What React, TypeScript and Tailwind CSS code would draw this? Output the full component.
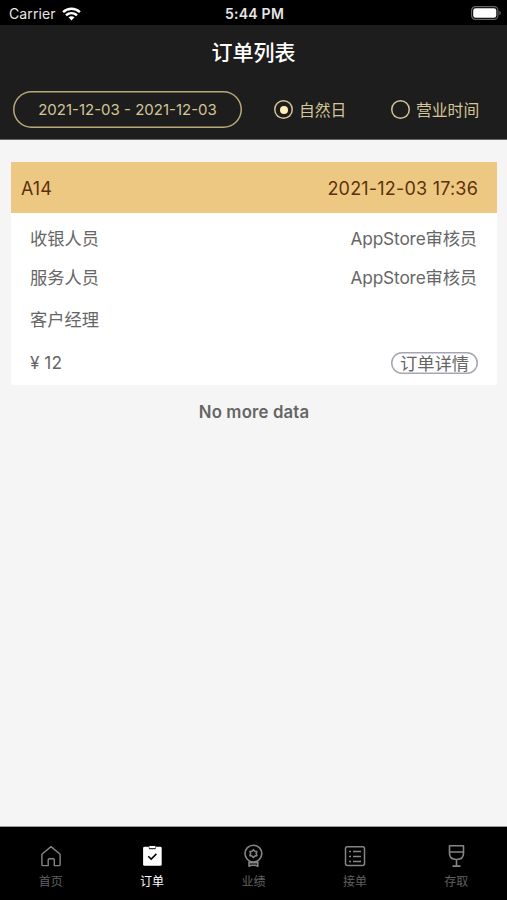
import type { ReactNode } from 'react';

function HomeIcon() {
  return (
    <svg width="24" height="24" viewBox="0 0 24 24" fill="none" stroke="#858585" strokeWidth="1.4" strokeLinejoin="round">
      <path d="M2.9 10.2 12 2.6l9.1 7.6v10.6a.8.8 0 0 1-.8.8h-5v-5.8a1 1 0 0 0-1-1h-4.1a1 1 0 0 0-1 1v5.8H3.7a.8.8 0 0 1-.8-.8z" />
    </svg>
  );
}

function OrderIcon() {
  return (
    <svg width="24" height="24" viewBox="0 0 24 24" fill="none">
      <rect x="3.1" y="2.8" width="18.6" height="19" rx="1.4" fill="#fff" />
      <rect x="8.9" y="1.8" width="7" height="3.4" rx="1" fill="#333" />
      <rect x="9.4" y="2" width="6" height="2" rx="0.5" fill="#fff" />
      <path d="m8.2 12.3 3 2.8 5.2-5.2" stroke="#000" strokeWidth="1.5" />
    </svg>
  );
}

function MedalIcon() {
  return (
    <svg width="24" height="24" viewBox="0 0 24 24" fill="none" stroke="#858585" strokeWidth="1.6" strokeLinejoin="round">
      <circle cx="12.4" cy="9.6" r="8.4" />
      <path d="m12.4 5.7 1.4 1.5 2 .4-.6 2 .6 2-2 .4-1.4 1.5-1.4-1.5-2-.4.6-2-.6-2 2-.4z" />
      <path d="M8 17.2v5l2.2-1h4.4l2.2 1v-5M8.2 18.6h8.4" />
    </svg>
  );
}

function ListIcon() {
  return (
    <svg width="24" height="24" viewBox="0 0 24 24" fill="none" stroke="#858585" strokeWidth="1.5">
      <rect x="2.5" y="2.8" width="19" height="18.8" rx="2" />
      <path d="M6 7.5h2M10 7.5h8M6 12.5h2M10 12.5h8M6 17.5h2M10 17.5h8" />
    </svg>
  );
}

function GlassIcon() {
  return (
    <svg width="24" height="24" viewBox="0 0 24 24" fill="none" stroke="#858585" strokeWidth="1.6" strokeLinejoin="round">
      <path d="M5.5 1.7h14v7.6c0 3.700-2.600 6.200-7 6.200s-7-2.500-7-6.200zM5.500 8h14M12.500 15.500v6.400M8.500 22.100h8" />
    </svg>
  );
}

const tabs: { label: string; icon: ReactNode; active?: boolean }[] = [
  { label: '首页', icon: <HomeIcon /> },
  { label: '订单', icon: <OrderIcon />, active: true },
  { label: '业绩', icon: <MedalIcon /> },
  { label: '接单', icon: <ListIcon /> },
  { label: '存取', icon: <GlassIcon /> },
];

function StatusBar() {
  return (
    <div className="grid h-[25px] shrink-0 grid-cols-[1fr_auto_1fr] items-center bg-black pl-[8px] pr-[6px] pt-[2px] text-[#e6e6e6]">
      <div className="flex items-center gap-[6px] pl-px">
        <span className="text-[14px] leading-none tracking-[0.1px]">Carrier</span>
        <svg width="19" height="14" viewBox="0 0 19 14" fill="none" stroke="#fff" strokeWidth="2.5">
          <path d="M1.1 5.2C6 .7 13 .7 17.9 5.2M4 8.300c3.300-2.900 7.700-2.900 11 0" />
          <path d="M6.5 10.3c1.800-1.500 4.200-1.500 6 0l-3 3.100z" fill="#fff" stroke="none" />
        </svg>
      </div>
      <span className="whitespace-nowrap text-center text-[14px] font-semibold leading-none tracking-[0.25px]">5:44 PM</span>
      <svg className="-mt-px justify-self-end" width="30" height="14" viewBox="0 0 30 14">
        <rect x=".6" y=".6" width="26.3" height="12.8" rx="3.8" fill="none" stroke="#666" strokeWidth="1.2" />
        <rect x="2.2" y="2.2" width="23.1" height="9.6" rx="2.4" fill="#fff" />
        <path d="M28.3 4.8c2 .8 2 3.600 0 4.400z" fill="#666" />
      </svg>
    </div>
  );
}

function Radio({ label, checked }: { label: string; checked?: boolean }) {
  return (
    <div className="flex items-center gap-[6px]">
      <span className="flex size-[19px] items-center justify-center rounded-full shadow-[inset_0_0_0_1.5px_#d3c596]">
        {checked && <span className="size-[8px] rounded-full bg-[#fff0b8]" />}
      </span>
      <span className="pt-[2px] text-[15.8px] leading-none text-[#d3c596]">{label}</span>
    </div>
  );
}

function Row({ label, value, className }: { label: string; value?: ReactNode; className: string }) {
  return (
    <div className={`flex items-center justify-between whitespace-nowrap text-[17.3px] leading-none text-[#666] ${className}`}>
      <span>{label}</span>
      {value}
    </div>
  );
}

export default function App() {
  return (
    <div className="flex h-[900px] w-[507px] flex-col overflow-hidden bg-[#f5f5f5] font-['Inter','Noto_Sans_CJK_SC',sans-serif]">
      <StatusBar />
      <header className="flex h-[115px] shrink-0 flex-col border-b border-[#666] bg-[#1d1d1d]">
        <h1 className="flex h-[54px] items-center justify-center pt-[2px] text-[21px] font-medium text-white">订单列表</h1>
        <div className="flex items-center pl-[13px] pt-[12px]">
          <div className="flex h-[37px] w-[229px] items-center justify-center rounded-full pt-[2px] text-[15px] text-[#d3c596] shadow-[inset_0_0_0_1.5px_#b9a878]">
            2021-12-03 - 2021-12-03
          </div>
          <div className="ml-[32px] w-[117px]">
            <Radio label="自然日" checked />
          </div>
          <Radio label="营业时间" />
        </div>
      </header>

      <main className="flex-1 pl-[11px] pr-[10px] pt-[22px]">
        <section className="h-[223px] bg-white">
          <div className="flex h-[51px] items-center justify-between bg-[#edc883] pl-[10px] pr-[19px] pt-px text-[18px] text-[#5b3209]">
            <span>A14</span>
            <span className="tracking-[0.2px]">2021-12-03 17:36</span>
          </div>
          <div className="pl-[19px] pr-[20px] pt-[6px]">
            <Row className="h-[39px]" label="收银人员" value={<span className="tracking-[-0.15px]">AppStore审核员</span>} />
            <Row className="h-[39px]" label="服务人员" value={<span className="tracking-[-0.15px]">AppStore审核员</span>} />
            <Row className="h-[46px]" label="客户经理" />
            <Row
              className="h-[40px]"
              label="¥ 12"
              value={
                <button className="-mr-px flex h-[22px] w-[87px] items-center justify-center rounded-full pt-px shadow-[inset_0_0_0_1.5px_#a6a6b4]">
                  订单详情
                </button>
              }
            />
          </div>
        </section>
        <p className="mt-[15px] text-center text-[16.8px] font-semibold tracking-[0.15px] text-[#666]">No more data</p>
      </main>

      <nav className="grid h-[74px] shrink-0 grid-cols-5 border-t border-[#999] bg-black">
        {tabs.map((tab) => (
          <div key={tab.label} className="flex flex-col items-center pt-[17px]">
            {tab.icon}
            <span className={`mt-[7px] text-[12px] leading-[13px] ${tab.active ? 'text-white' : 'text-[#606060]'}`}>{tab.label}</span>
          </div>
        ))}
      </nav>
    </div>
  );
}
